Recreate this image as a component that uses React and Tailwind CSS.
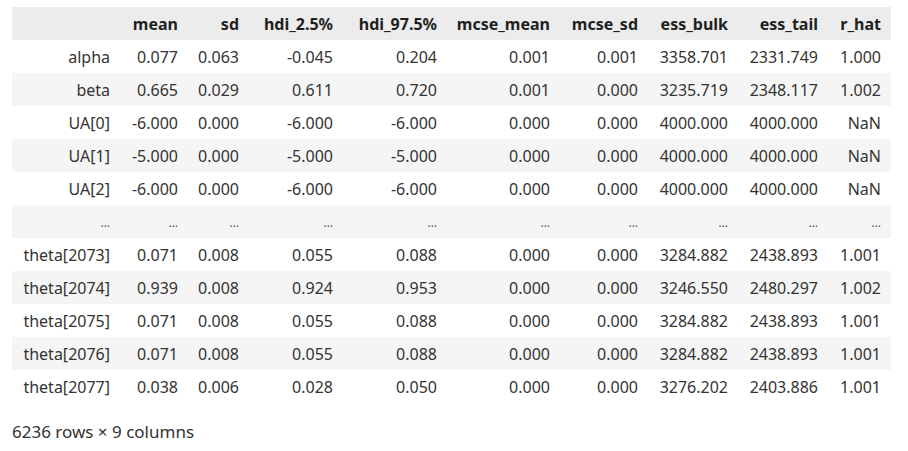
const cols = ["mean","sd","hdi_2.5%","hdi_97.5%","mcse_mean","mcse_sd","ess_bulk","ess_tail","r_hat"];
const widths = ["w-[108px]","w-[68px]","w-[61px]","w-[94px]","w-[104px]","w-[113px]","w-[88px]","w-[90px]","w-[90px]","w-[63px]"];
const rows = [
  ["alpha","0.077","0.063","-0.045","0.204","0.001","0.001","3358.701","2331.749","1.000"],
  ["beta","0.665","0.029","0.611","0.720","0.001","0.000","3235.719","2348.117","1.002"],
  ["UA[0]","-6.000","0.000","-6.000","-6.000","0.000","0.000","4000.000","4000.000","NaN"],
  ["UA[1]","-5.000","0.000","-5.000","-5.000","0.000","0.000","4000.000","4000.000","NaN"],
  ["UA[2]","-6.000","0.000","-6.000","-6.000","0.000","0.000","4000.000","4000.000","NaN"],
  ["...","...","...","...","...","...","...","...","...","..."],
  ["theta[2073]","0.071","0.008","0.055","0.088","0.000","0.000","3284.882","2438.893","1.001"],
  ["theta[2074]","0.939","0.008","0.924","0.953","0.000","0.000","3246.550","2480.297","1.002"],
  ["theta[2075]","0.071","0.008","0.055","0.088","0.000","0.000","3284.882","2438.893","1.001"],
  ["theta[2076]","0.071","0.008","0.055","0.088","0.000","0.000","3284.882","2438.893","1.001"],
  ["theta[2077]","0.038","0.006","0.028","0.050","0.000","0.000","3276.202","2403.886","1.001"],
];

export default function App() {
  return (
    <div className="w-[908px] h-[451px] bg-white text-[16px] text-[#333333] pt-[7px] pl-[12px]" style={{fontFamily: '"Noto Sans", "Open Sans", sans-serif'}}>
      <table className="border-collapse table-fixed">
        <thead>
          <tr className="bg-[#ececec] h-[33px]">
            <th className={`${widths[0]} p-0`}></th>
            {cols.map((c, i) => (
              <th key={c} className={`${widths[i+1]} p-0 pt-[2px] pr-[10px] text-right font-bold text-[#1f1f1f] leading-[31px] whitespace-nowrap`}>{c}</th>
            ))}
          </tr>
        </thead>
        <tbody>
          {rows.map((r, ri) => (
            <tr key={ri} className={`h-[33px] ${ri % 2 === 1 ? "bg-[#f5f5f5]" : "bg-white"}`}>
              {r.map((v, ci) => (
                <td key={ci} className={`${widths[ci]} p-0 pt-[2px] pr-[10px] text-right leading-[31px] whitespace-nowrap ${v === "..." ? "text-[12px] text-[#555]" : ""}`}>{v === "..." ? "…" : v}</td>
              ))}
            </tr>
          ))}
        </tbody>
      </table>
      <div className="mt-[18px] text-[17px] leading-[22px] text-[#333333]">6236 rows × 9 columns</div>
    </div>
  );
}
